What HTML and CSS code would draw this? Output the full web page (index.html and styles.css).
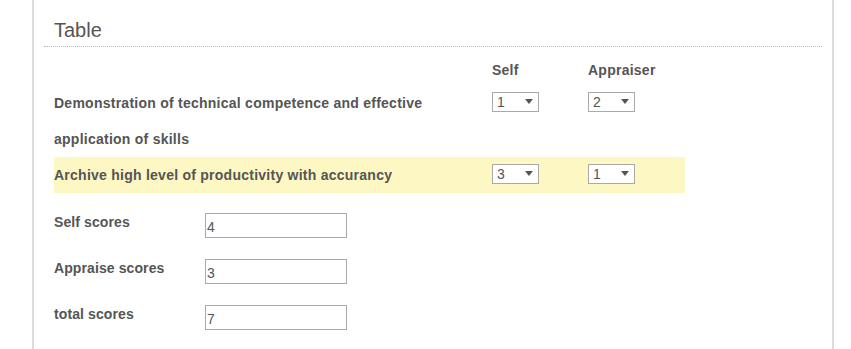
FILE: index.html
```html
<!DOCTYPE html>
<html lang="en">
<head>
    <meta charset="UTF-8">
    <meta name="viewport" content="width=device-width, initial-scale=1.0">
    <title>Table</title>
    <link rel="stylesheet" href="styles.css">
</head>
<body>
    <div class="panel">
        <h3 class="panel-title">Table</h3>

        <table class="score-table">
            <thead>
                <tr>
                    <th class="col-label"></th>
                    <th class="col-self">Self</th>
                    <th class="col-appraiser">Appraiser</th>
                </tr>
            </thead>
            <tbody>
                <tr>
                    <td>Demonstration of technical competence and effective application of skills</td>
                    <td>
                        <div class="select-box">
                            <select>
                                <option selected>1</option>
                                <option>2</option>
                                <option>3</option>
                            </select>
                        </div>
                    </td>
                    <td>
                        <div class="select-box">
                            <select>
                                <option>1</option>
                                <option selected>2</option>
                                <option>3</option>
                            </select>
                        </div>
                    </td>
                </tr>
                <tr class="highlight">
                    <td>Archive high level of productivity with accurancy</td>
                    <td>
                        <div class="select-box">
                            <select>
                                <option>1</option>
                                <option>2</option>
                                <option selected>3</option>
                            </select>
                        </div>
                    </td>
                    <td>
                        <div class="select-box">
                            <select>
                                <option selected>1</option>
                                <option>2</option>
                                <option>3</option>
                            </select>
                        </div>
                    </td>
                </tr>
            </tbody>
        </table>

        <div class="scores">
            <div class="score-row">
                <label>Self scores</label>
                <input type="text" value="4">
            </div>
            <div class="score-row">
                <label>Appraise scores</label>
                <input type="text" value="3">
            </div>
            <div class="score-row">
                <label>total scores</label>
                <input type="text" value="7">
            </div>
        </div>
    </div>
</body>
</html>
```

FILE: styles.css
```css
body {
    margin: 0;
    background-color: #fff;
    font-family: "Liberation Sans", Arial, sans-serif;
    color: #555;
}
.panel {
    margin-left: 32px;
    width: 802px;
    min-height: 349px;
    box-sizing: border-box;
    border-left: 2px solid #ddd;
    border-right: 2px solid #ddd;
    padding: 0 10px;
}
.panel-title {
    margin: 0;
    padding: 18px 0 4px 10px;
    font-size: 20px;
    line-height: 24px;
    font-weight: normal;
    color: #555;
    border-bottom: 1px dotted #bbb;
}
.score-table {
    margin: 8px 0 0 10px;
    width: 631px;
    table-layout: fixed;
    border-collapse: collapse;
    font-size: 14px;
    font-weight: bold;
    letter-spacing: 0.25px;
}
.score-table th {
    text-align: left;
    line-height: 30px;
    padding: 0;
}
.score-table td {
    padding: 0;
    line-height: 36px;
    vertical-align: top;
}
.col-label {
    width: 438px;
}
.col-self {
    width: 96px;
}
.col-appraiser {
    width: 97px;
}
.highlight td {
    background-color: #fdf7c3;
}
.select-box {
    position: relative;
    width: 47px;
    height: 20px;
    margin-top: 7px;
}
.select-box select {
    display: block;
    appearance: none;
    -webkit-appearance: none;
    width: 47px;
    height: 20px;
    box-sizing: border-box;
    border: 1px solid #a9a9a9;
    border-radius: 0;
    background-color: #fff;
    padding: 0 0 0 4px;
    font-family: "Liberation Sans", Arial, sans-serif;
    font-size: 14px;
    line-height: 18px;
    letter-spacing: 0;
    color: #555;
    outline: none;
}
.select-box::after {
    content: "";
    position: absolute;
    right: 6px;
    top: 7px;
    border-left: 4px solid transparent;
    border-right: 4px solid transparent;
    border-top: 5px solid #555;
    pointer-events: none;
}
.scores {
    margin: 20px 0 0 10px;
}
.score-row {
    display: flex;
    align-items: flex-start;
    margin-bottom: 21px;
}
.score-row label {
    width: 151px;
    font-size: 14px;
    font-weight: bold;
    line-height: 18px;
    letter-spacing: 0.1px;
}
.score-row input {
    width: 142px;
    height: 25px;
    box-sizing: border-box;
    border: 1px solid #a9a9a9;
    padding: 2px 1px 0;
    font-family: "Liberation Sans", Arial, sans-serif;
    font-size: 14px;
    color: #555;
    outline: none;
}
```
